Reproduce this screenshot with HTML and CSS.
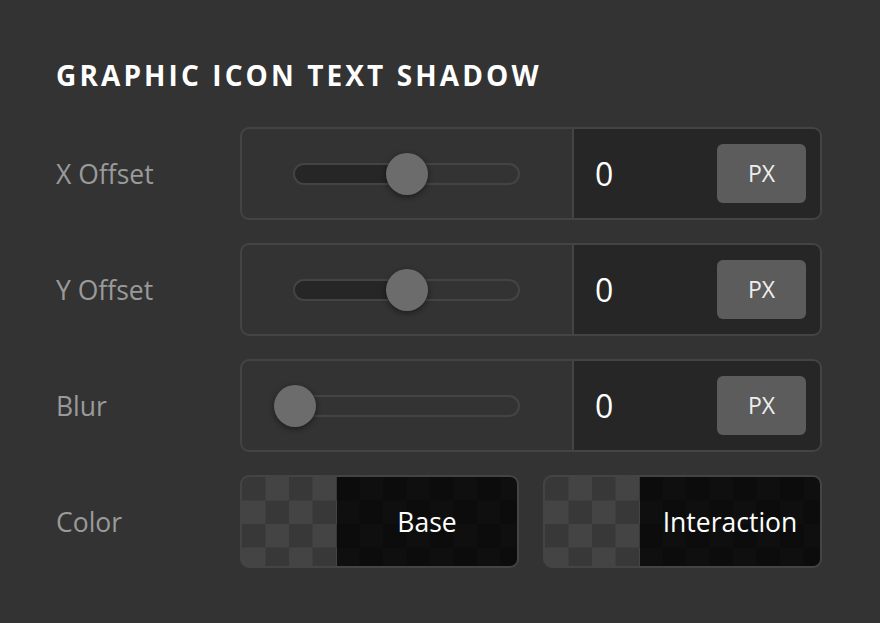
FILE: index.html
```html
<!DOCTYPE html>
<html lang="en">
<head>
    <meta charset="UTF-8">
    <meta name="viewport" content="width=device-width, initial-scale=1.0">
    <title>Graphic Icon Text Shadow</title>
    <link rel="stylesheet" href="styles.css">
</head>
<body>
    <div class="panel">
        <h2 class="panel-title">GRAPHIC ICON TEXT SHADOW</h2>

        <div class="field">
            <label class="field-label">X Offset</label>
            <div class="control">
                <div class="slider">
                    <div class="track">
                        <div class="track-fill" style="width: 50%"></div>
                        <div class="thumb" style="left: 50%"></div>
                    </div>
                </div>
                <div class="value">
                    <span class="number">0</span>
                    <span class="unit">PX</span>
                </div>
            </div>
        </div>

        <div class="field">
            <label class="field-label">Y Offset</label>
            <div class="control">
                <div class="slider">
                    <div class="track">
                        <div class="track-fill" style="width: 50%"></div>
                        <div class="thumb" style="left: 50%"></div>
                    </div>
                </div>
                <div class="value">
                    <span class="number">0</span>
                    <span class="unit">PX</span>
                </div>
            </div>
        </div>

        <div class="field">
            <label class="field-label">Blur</label>
            <div class="control">
                <div class="slider">
                    <div class="track">
                        <div class="track-fill" style="width: 0%"></div>
                        <div class="thumb" style="left: 0%"></div>
                    </div>
                </div>
                <div class="value">
                    <span class="number">0</span>
                    <span class="unit">PX</span>
                </div>
            </div>
        </div>

        <div class="field">
            <label class="field-label">Color</label>
            <div class="swatches">
                <div class="swatch">
                    <div class="swatch-empty"></div>
                    <div class="swatch-color">Base</div>
                </div>
                <div class="swatch">
                    <div class="swatch-empty"></div>
                    <div class="swatch-color">Interaction</div>
                </div>
            </div>
        </div>
    </div>
</body>
</html>
```

FILE: styles.css
```css
body {
    margin: 0;
    background-color: #333333;
    font-family: "Open Sans", "DejaVu Sans", sans-serif;
    color: #ffffff;
}
.panel {
    padding: 55px 58px 0 56px;
}
.panel-title {
    margin: 0 0 32px 0;
    font-size: 28px;
    line-height: 40px;
    font-weight: 700;
    letter-spacing: 3.1px;
}
.field {
    display: grid;
    grid-template-columns: 184px 1fr;
    align-items: center;
    margin-bottom: 23px;
}
.field-label {
    font-size: 26.5px;
    color: #9a9a9a;
}
/* Caja con slider y valor */
.control {
    display: flex;
    height: 93px;
    box-sizing: border-box;
    border: 2px solid #444444;
    border-radius: 9px;
    overflow: hidden;
}
.slider {
    width: 330px;
    display: flex;
    align-items: center;
    padding-left: 51px;
    box-sizing: border-box;
}
.track {
    position: relative;
    width: 227px;
    height: 22px;
    box-sizing: border-box;
    border: 2px solid #444444;
    border-radius: 11px;
    background-color: #333333;
}
.track-fill {
    height: 100%;
    border-radius: 9px 0 0 9px;
    background-color: #262626;
}
.thumb {
    position: absolute;
    top: 50%;
    width: 42px;
    height: 42px;
    margin-left: -21px;
    margin-top: -21px;
    border-radius: 50%;
    background-color: #6c6c6c;
    box-shadow: 0 2px 6px rgba(0, 0, 0, 0.45);
}
.value {
    flex: 1;
    display: flex;
    align-items: center;
    justify-content: space-between;
    padding: 0 14px 0 21px;
    border-left: 2px solid #444444;
    background-color: #262626;
}
.number {
    font-size: 32px;
}
.unit {
    width: 89px;
    height: 59px;
    line-height: 59px;
    text-align: center;
    border-radius: 6px;
    background-color: #5c5c5c;
    color: #eeeeee;
    font-size: 23px;
}
/* Muestras de color */
.swatches {
    display: grid;
    grid-template-columns: 1fr 1fr;
    gap: 24px;
}
.swatch {
    display: flex;
    height: 93px;
    box-sizing: border-box;
    border: 2px solid #444444;
    border-radius: 9px;
    overflow: hidden;
    background-color: #383838;
    background-image:
        linear-gradient(45deg, #444444 25%, transparent 25%, transparent 75%, #444444 75%),
        linear-gradient(45deg, #444444 25%, transparent 25%, transparent 75%, #444444 75%);
    background-size: 47px 47px;
    background-position: 0 0, 23.5px 23.5px;
}
.swatch-empty {
    width: 95px;
}
.swatch-color {
    flex: 1;
    display: flex;
    align-items: center;
    justify-content: center;
    background-color: rgba(0, 0, 0, 0.78);
    font-size: 26.5px;
}
```
